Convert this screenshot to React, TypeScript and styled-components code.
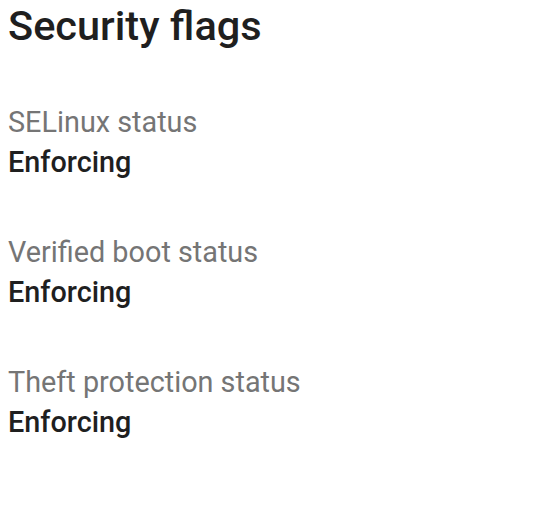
import styled, { createGlobalStyle } from 'styled-components';

const GlobalStyle = createGlobalStyle`
  html, body {
    margin: 0;
    padding: 0;
    background: #ffffff;
    font-family: Roboto, "Noto Sans", sans-serif;
  }
`;

const Page = styled.div`
  padding: 0 8px;
  display: flex;
  flex-direction: column;
`;

const Title = styled.h1`
  margin: 0;
  font-size: 41.5px;
  font-weight: 500;
  line-height: 52px;
  color: #1f1f1f;
`;

const List = styled.div`
  display: flex;
  flex-direction: column;
  gap: 50px;
  padding-top: 50px;
`;

const Item = styled.div`
  display: flex;
  flex-direction: column;
`;

const Label = styled.div`
  font-size: 28.8px;
  line-height: 40px;
  color: #757575;
`;

const Value = styled.div`
  font-size: 28.8px;
  font-weight: 500;
  line-height: 40px;
  color: #1f1f1f;
`;

const flags = [
  { label: 'SELinux status', value: 'Enforcing' },
  { label: 'Verified boot status', value: 'Enforcing' },
  { label: 'Theft protection status', value: 'Enforcing' },
];

export default function App() {
  return (
    <>
      <GlobalStyle />
      <Page>
        <Title>Security flags</Title>
        <List>
          {flags.map((f) => (
            <Item key={f.label}>
              <Label>{f.label}</Label>
              <Value>{f.value}</Value>
            </Item>
          ))}
        </List>
      </Page>
    </>
  );
}
